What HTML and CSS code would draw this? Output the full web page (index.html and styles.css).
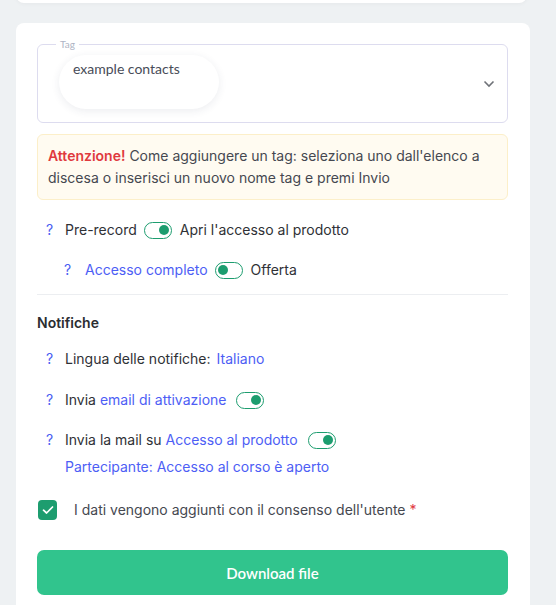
FILE: index.html
```html
<!DOCTYPE html>
<html lang="it">
<head>
<meta charset="utf-8">
<title>Tag</title>
<link rel="stylesheet" href="styles.css">
</head>
<body>
<div class="page">
  <div class="card card-prev"></div>
  <div class="card card-main">
    <fieldset class="tag-field">
      <legend>Tag</legend>
      <div class="tag-inner">
        <div class="chip">example contacts</div>
        <svg class="chevron" width="12" height="8" viewBox="0 0 12 8"><path d="M1.5 1.5 L6 6 L10.5 1.5" fill="none" stroke="#6f7278" stroke-width="1.6"/></svg>
      </div>
    </fieldset>

    <div class="warning"><strong>Attenzione!</strong> Come aggiungere un tag: seleziona uno dall'elenco a discesa o inserisci un nuovo nome tag e premi Invio</div>

    <div class="row row-pre">
      <span class="q">?</span>
      <span>Pre-record</span>
      <span class="toggle on"></span>
      <span>Apri l'accesso al prodotto</span>
    </div>
    <div class="row row-sub">
      <span class="q">?</span>
      <span class="link">Accesso completo</span>
      <span class="toggle off"></span>
      <span>Offerta</span>
    </div>

    <div class="divider"></div>

    <div class="section-title">Notifiche</div>

    <div class="row row-n1">
      <span class="q">?</span>
      <span>Lingua delle notifiche:</span>
      <span class="link lang">Italiano</span>
    </div>
    <div class="row row-n2">
      <span class="q">?</span>
      <span>Invia <span class="link">email di attivazione</span></span>
      <span class="toggle on wide-gap"></span>
    </div>
    <div class="row row-n3">
      <span class="q">?</span>
      <span>Invia la mail su <span class="link">Accesso al prodotto</span></span>
      <span class="toggle on wide-gap"></span>
    </div>
    <div class="sub-link link">Partecipante: Accesso al corso è aperto</div>

    <label class="consent">
      <span class="checkbox"><svg width="12" height="10" viewBox="0 0 12 10"><path d="M1.5 5.2 L4.6 8 L10.5 2" fill="none" stroke="#fff" stroke-width="1.7" stroke-linecap="round" stroke-linejoin="round"/></svg></span>
      <span>I dati vengono aggiunti con il consenso dell'utente <span class="req">*</span></span>
    </label>

    <button class="download">Download file</button>
  </div>
</div>
</body>
</html>
```

FILE: styles.css
```css
* { box-sizing: border-box; }
html, body { margin: 0; padding: 0; }
body {
  background: #eef1f3;
  font-family: Inter, "Noto Sans", sans-serif;
  font-size: 14px;
  color: #3b3d42;
  overflow: hidden;
}
.page {
  padding-left: 16px;
  width: 530px;
}
.card {
  background: #fff;
  border-radius: 8px;
}
.card-prev {
  width: 511px;
  height: 23px;
  margin-top: -20px;
  box-shadow: 0 1px 4px rgba(0, 0, 0, 0.04);
}
.card-main {
  margin-top: 20px;
  width: 514px;
  padding: 15px 22px 20px 21px;
  height: 620px;
}
.tag-field {
  margin: 0;
  border: 1px solid #dddcef;
  border-radius: 6px;
  padding: 0 0 13px 21px;
  min-width: 0;
}
.tag-field legend {
  font-family: Lato, "Open Sans", sans-serif;
  font-size: 10px;
  line-height: 12px;
  color: #aeb4c4;
  padding: 0 4px;
  margin-left: -3px;
}
.tag-inner {
  display: flex;
  align-items: center;
  padding-top: 5px;
}
.chip {
  font-family: Lato, "Open Sans", sans-serif;
  font-size: 14px;
  line-height: 18px;
  color: #484c58;
  width: 160px;
  height: 54px;
  border-radius: 27px;
  padding: 5px 14px;
  background: #fff;
  box-shadow: 0 2px 9px rgba(40, 50, 90, 0.09);
}
.chevron {
  margin-left: auto;
  margin-right: 12px;
  margin-top: 4px;
}
.warning {
  margin-top: 11px;
  background: #fffbf1;
  border: 1px solid #fcefc9;
  border-radius: 6px;
  padding: 10px 11px 10px 10px;
  line-height: 22px;
  color: #454850;
}
.warning strong {
  color: #e0393e;
  font-weight: 600;
}
.row {
  display: flex;
  align-items: center;
  line-height: 20px;
  color: #2f3136;
}
.q {
  color: #4a5cf2;
  width: 28px;
  padding-left: 9px;
  font-size: 14px;
}
.link { color: #4d5ef5; }
.row-pre { margin-top: 20px; }
.row-sub { margin-top: 20px; padding-left: 18px; }
.row-sub .q { width: 30px; }
.toggle {
  position: relative;
  display: inline-block;
  width: 28px;
  height: 17px;
  border: 1.5px solid #1d9d6f;
  border-radius: 9px;
  margin: 0 8px 0 7px;
  flex: none;
}
.toggle::after {
  content: "";
  position: absolute;
  top: 2px;
  width: 10px;
  height: 10px;
  border-radius: 50%;
  background: #1d9d6f;
}
.toggle.on::after { right: 2px; }
.toggle.off::after { left: 2px; }
.toggle.wide-gap { margin-left: 10px; }
.divider {
  height: 1px;
  background: #eceef1;
  margin-top: 14px;
}
.section-title {
  margin-top: 18px;
  font-weight: 600;
  color: #2b2d31;
  line-height: 20px;
}
.row-n1 { margin-top: 16px; }
.lang { margin-left: 6px; }
.row-n2 { margin-top: 21px; }
.row-n3 { margin-top: 20px; }
.sub-link {
  margin-left: 28px;
  margin-top: 7px;
  line-height: 20px;
}
.consent {
  display: flex;
  align-items: center;
  margin-top: 23px;
  color: #454850;
  line-height: 20px;
}
.checkbox {
  width: 19px;
  height: 20px;
  border-radius: 4px;
  background: #1d9d6f;
  display: flex;
  align-items: center;
  justify-content: center;
  margin-left: 1px;
  margin-right: 17px;
}
.req { color: #e0393e; }
.download {
  display: block;
  width: 100%;
  margin-top: 30px;
  height: 45px;
  border: none;
  border-radius: 7px;
  background: #31c48d;
  color: #fff;
  font-family: Lato, "Open Sans", sans-serif;
  font-weight: 600;
  font-size: 15px;
}
```
